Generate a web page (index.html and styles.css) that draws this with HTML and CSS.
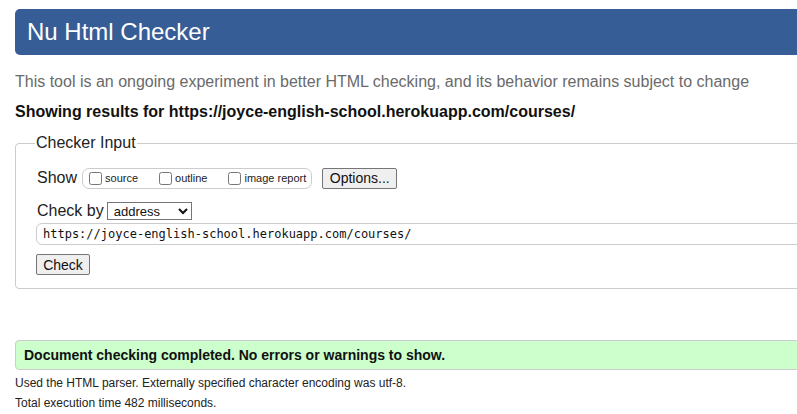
FILE: index.html
```html
<!DOCTYPE html>
<html lang="en">
<head>
<meta charset="utf-8">
<title>Nu Html Checker</title>
<link rel="stylesheet" href="styles.css">
</head>
<body>
<div class="page">
  <h1 class="banner">Nu Html Checker</h1>
  <p class="intro">This tool is an ongoing experiment in better HTML checking, and its behavior remains subject to change</p>
  <p class="showing">Showing results for https://joyce-english-school.herokuapp.com/courses/</p>
  <form class="checker">
    <fieldset class="field">
      <legend class="legend">Checker Input</legend>
      <div class="row show-row">
        <span class="label">Show</span>
        <span class="opts">
          <label class="opt"><input type="checkbox" class="cb">source</label>
          <label class="opt"><input type="checkbox" class="cb">outline</label>
          <label class="opt"><input type="checkbox" class="cb">image report</label>
        </span>
        <button type="button" class="btn btn-options">Options...</button>
      </div>
      <div class="row by-row">
        <span class="label">Check by</span>
        <select class="select"><option>address</option></select>
      </div>
      <input class="url" type="text" value="https://joyce-english-school.herokuapp.com/courses/">
      <div class="row submit-row">
        <button type="button" class="btn btn-check">Check</button>
      </div>
    </fieldset>
  </form>
  <p class="success">Document checking completed. No errors or warnings to show.</p>
  <p class="details">Used the HTML parser. Externally specified character encoding was utf-8.</p>
  <p class="details">Total execution time 482 milliseconds.</p>
</div>
</body>
</html>
```

FILE: styles.css
```css
html, body {
  margin: 0;
  padding: 0;
  overflow: hidden;
  background: #fff;
}
body {
  font-family: Arial, "Liberation Sans", sans-serif;
  color: #222;
}
.page {
  width: 1100px;
  padding: 9px 0 0 15px;
}
.banner {
  margin: 0;
  height: 46px;
  line-height: 46px;
  padding: 0 12px;
  background: #365d95;
  color: #fff;
  font-size: 24px;
  font-weight: normal;
  border-radius: 5px;
}
.intro {
  margin: 17px 0 0;
  line-height: 20px;
  font-size: 16px;
  color: #6a6a6a;
}
.showing {
  margin: 10px 0 0;
  line-height: 20px;
  font-size: 16px;
  font-weight: bold;
  color: #111;
}
.checker {
  margin: 12px 0 0;
}
.field {
  margin: 0;
  padding: 15px 21px 13px;
  border: 1px solid #cccccc;
  border-radius: 4px;
  min-width: 0;
}
.legend {
  padding: 0 1px;
  margin-left: -2px;
  font-size: 16px;
  color: #222;
}
.row {
  display: flex;
  align-items: center;
}
.label {
  font-size: 16px;
  color: #222;
  margin-right: 5px;
}
.show-row {
  height: 22px;
}
.opts {
  display: flex;
  align-items: center;
  height: 19px;
  border: 1px solid #cccccc;
  border-radius: 7px;
  padding: 0 5px 0 6px;
}
.opt {
  display: flex;
  align-items: center;
  font-size: 11px;
  color: #222;
  margin-right: 21px;
}
.opt:last-child {
  margin-right: 0;
}
.cb {
  width: 13px;
  height: 13px;
  margin: 0 3px 0 0;
}
.btn {
  font-family: Arial, "Liberation Sans", sans-serif;
  font-size: 14px;
  color: #111;
  background: #efefef;
  border: 1px solid #767676;
  border-radius: 2px;
  padding: 1px 6px;
}
.btn-options {
  margin-left: 10px;
  height: 21px;
  width: 75px;
}
.by-row {
  margin-top: 12px;
  height: 20px;
}
.select {
  font-family: Arial, "Liberation Sans", sans-serif;
  font-size: 13px;
  width: 85px;
  height: 18px;
  padding: 0 2px;
  border: 1px solid #767676;
  border-radius: 0;
  background: #fff;
  color: #111;
  margin-left: -2px;
}
.url {
  display: block;
  box-sizing: border-box;
  margin: 2px 0 0 -1px;
  width: 100%;
  height: 22px;
  padding: 0 6px;
  border: 1px solid #cccccc;
  border-radius: 6px;
  font-family: "DejaVu Sans Mono", monospace;
  font-size: 12px;
  color: #111;
}
.submit-row {
  margin-top: 9px;
}
.btn-check {
  margin-left: -1px;
  height: 21px;
  width: 54px;
}
.success {
  margin: 51px 0 0;
  height: 28px;
  line-height: 28px;
  padding: 0 8px;
  background: #ccffcc;
  border: 1px solid #cccccc;
  border-radius: 4px;
  font-size: 14px;
  font-weight: bold;
  color: #111;
}
.details {
  margin: 5px 0 0;
  font-size: 12px;
  line-height: 16px;
  color: #222;
}
.details + .details {
  margin-top: 4px;
}
```
